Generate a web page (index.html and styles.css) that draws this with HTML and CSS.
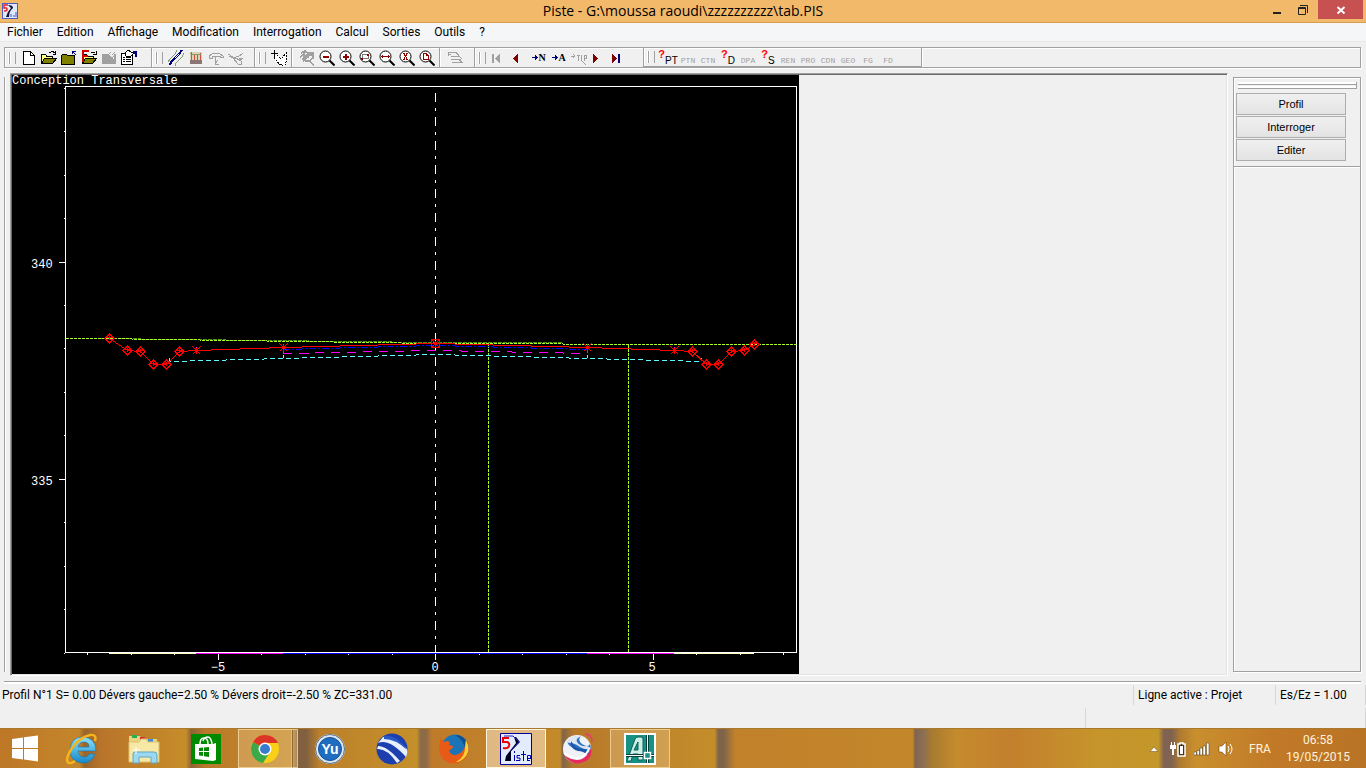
FILE: index.html
```
<!DOCTYPE html>
<html lang="fr">
    <head>
        <meta charset="UTF-8" />
        <meta name="viewport" content="width=device-width, initial-scale=1.0" />
        <title>Piste</title>
        <link rel="stylesheet" href="styles.css">
    </head>
    <body>
        <header class="titlebar">
            <svg class="app-icon" viewBox="0 0 16 16">
                <rect x=".5" y=".5" width="15" height="15" fill="#dfe8fb" stroke="#4a5ec8" />
                <path d="M6 2h-4v3h2.500q2 3-2.500 3" fill="none" stroke="#f02020" stroke-width="1.500" />
                <path d="M6 2q5 0 5 3q-4 3-4 9H4q1-5 5-9" fill="#111133" />
                <path d="M9 11v3M11 13h2M14 9v5" stroke="#3a50d0" />
            </svg>
            <h1>Piste - G:\moussa raoudi\zzzzzzzzzz\tab.PIS</h1>
            <div class="window-buttons">
                <button class="win-btn" aria-label="Réduire">
                    <svg viewBox="0 0 12 12"><path d="M2 8h8v2H2z" fill="#222" /></svg>
                </button>
                <button class="win-btn" aria-label="Restaurer">
                    <svg viewBox="0 0 12 12" fill="none" stroke="#222"><path d="M3 1.500h7.500V9" /><path d="M1.500 3.500h7v7h-7zM1 4.500h8" /></svg>
                </button>
                <button class="win-btn close" aria-label="Fermer">
                    <svg viewBox="0 0 12 12" stroke="#fff" stroke-width="2"><path d="M2.500 3l7 6.500M9.500 3l-7 6.500" /></svg>
                </button>
            </div>
        </header>

        <nav class="menubar">
            <button>Fichier</button>
            <button>Edition</button>
            <button>Affichage</button>
            <button>Modification</button>
            <button>Interrogation</button>
            <button>Calcul</button>
            <button>Sorties</button>
            <button>Outils</button>
            <button>?</button>
        </nav>

        <div class="toolbar">
            <div class="tool-group files">
                <span class="grip"></span>
                <button aria-label="Nouveau"><svg viewBox="0 0 16 16"><path d="M2.500 1.500h7l4 4v9h-11z" fill="#fff" stroke="#000" /><path d="M9.500 1.500v4h4" fill="none" stroke="#000" /></svg></button>
                <button aria-label="Ouvrir"><svg viewBox="0 0 16 16"><path d="M.5 13.500v-9h4l1 1.500h6v3" fill="#ffff80" stroke="#000" /><path d="M.5 13.500l3-5h12l-4 5z" fill="#808000" stroke="#000" /><path d="M8.500 3q3-3 5 0M14.500 1v3h-3" fill="none" stroke="#000" /></svg></button>
                <button aria-label="Fermer le dossier"><svg viewBox="0 0 16 16"><path d="M.5 14.500v-9l1-1.500h4l1 1.500h7v9z" fill="#808000" stroke="#000" /><path d="M11.500 4V1.500H15M12 2l3 3" fill="none" stroke="#000080" /></svg></button>
                <button aria-label="Fond de plan"><svg viewBox="0 0 16 16"><path d="M1.500 13.500v-9h4l1 1.500h6v3" fill="#ffff80" stroke="#000" /><path d="M1.500 13.500l3-5h11l-4 5z" fill="#808000" stroke="#000" /><path d="M2 12V1h6M2 6h5" fill="none" stroke="#d00000" stroke-width="2" /><path d="M10 3q3-2 4 0M15 1v3h-3" fill="none" stroke="#000" /></svg></button>
                <button disabled aria-label="Enregistrer"><svg viewBox="0 0 16 16"><path d="M1 4h6l6 5V4h2v10H1z" fill="#a0a0a0" /><path d="M8 4l2-2M11 5l3-3M11 8l4-4" stroke="#a0a0a0" /></svg></button>
                <button aria-label="Propriétés"><svg viewBox="0 0 16 16"><path d="M.5 3.500h11v11H.5z" fill="#fff" stroke="#000" /><path d="M2 7.500h2M5 7.500h5M2 9.500h2M5 9.500h5M2 11.500h2M5 11.500h5" stroke="#000" /><path d="M4 3l3-3 3 2 3 1-3 3H5z" fill="#fff" stroke="#000" /><path d="M12 1h4v6h-2V4h-2z" fill="#000080" /></svg></button>
            </div>
            <div class="tool-group views">
                <span class="grip"></span>
                <button aria-label="Axe en plan"><svg viewBox="0 0 16 16" fill="none"><path d="M0 12q2-4 5-6t4-6M7 16q0-3 4-6t5-7" stroke="#7f9f70" /><path d="M2 15q1-4 5-7t7-8" stroke="#000080" stroke-width="2" /><path d="M7 8l4-4" stroke="#fff" /></svg></button>
                <button aria-label="Profil en long"><svg viewBox="0 0 16 16"><path d="M2 2h12v12H2z" fill="#d9d4b8" /><path d="M3.500 2v9M6.500 5v6M9.500 4v7M12.500 3v8" stroke="#d05040" /><path d="M2 3l4 2 7-1" fill="none" stroke="#80a060" /><path d="M2 10h12v4H2z" fill="#8b7575" /></svg></button>
                <button disabled aria-label="Profil en travers"><svg viewBox="0 0 16 16" fill="none" stroke="#a0a0a0"><path d="M1 8V6q7-6 14 0v1h-3v-1H4v2zM7.500 7v7h3M7.500 14l2-4" /></svg></button>
                <button disabled aria-label="Perspective"><svg viewBox="0 0 16 16" fill="none" stroke="#a0a0a0"><path d="M0 4l5 3q5 1 10-4M1 6q7 5 14 2M5 8l5 6h3v-3L6 7M9 9h5" /></svg></button>
            </div>
            <div class="tool-group pick">
                <span class="grip"></span>
                <button aria-label="Désigner"><svg viewBox="0 0 16 16"><path d="M3.500 0v7M0 3.500h7" stroke="#000" /><path d="M3 7l3-2 3 3h2l4-5v9l-1 4H9L4 11z" fill="#fff" /><path d="M3 7l6 8M6 5l3 3h2l4-5v9l-1 3M9 15l2-1v2" fill="none" stroke="#000" stroke-dasharray="2 1" /></svg></button>
            </div>
            <div class="tool-group zooms">
                <button disabled aria-label="Redessiner"><svg viewBox="0 0 16 16" fill="none" stroke="#a0a0a0"><path d="M2 3l4-2 3 2v4l-5 4M1 7l6-5M3 10l7-7h4v5l-4 3H6M10 11l5 4M5 4v6M8 5h6M12 3l-6 6" stroke-width="1.500" /></svg></button>
                <button aria-label="Zoom arrière"><svg viewBox="0 0 16 16"><circle cx="6.500" cy="6.500" r="5.500" class="lens" /><path d="M10.500 10.500l5 5" class="stem" /><path d="M4 6.500h6" stroke="#900000" stroke-width="2" /></svg></button>
                <button aria-label="Zoom avant"><svg viewBox="0 0 16 16"><circle cx="6.500" cy="6.500" r="5.500" class="lens" /><path d="M10.500 10.500l5 5" class="stem" /><path d="M4 7h6M7 4v6" stroke="#900000" stroke-width="2" /></svg></button>
                <button aria-label="Zoom fenêtre"><svg viewBox="0 0 16 16"><circle cx="6.500" cy="6.500" r="5.500" class="lens" /><path d="M10.500 10.500l5 5" class="stem" /><path d="M3.500 4.500h6v4h-6z" fill="none" stroke="#777" /><path d="M8 4h2v2H8zM2 8h2v2H2z" fill="#900000" /></svg></button>
                <button aria-label="Zoom largeur"><svg viewBox="0 0 16 16"><circle cx="6.500" cy="6.500" r="5.500" class="lens" /><path d="M10.500 10.500l5 5" class="stem" /><path d="M2 6.500h9M3.500 5v3M9.500 5v3" stroke="#900000" /></svg></button>
                <button aria-label="Zoom X"><svg viewBox="0 0 16 16"><circle cx="6.500" cy="6.500" r="5.500" class="lens" /><path d="M10.500 10.500l5 5" class="stem" /><path d="M4 3.500h2M7 3.500h2M5 4l3 5M8 4L5 9M4 9.500h2M7 9.500h2" stroke="#900000" /></svg></button>
                <button aria-label="Zoom page"><svg viewBox="0 0 16 16"><circle cx="6.500" cy="6.500" r="5.500" class="lens" /><path d="M10.500 10.500l5 5" class="stem" /><path d="M4.500 3.500h3l2 2v4h-5zM7.500 3.500v2h2" fill="#fff" stroke="#900000" /></svg></button>
            </div>
            <div class="tool-group layers">
                <button disabled aria-label="Calques"><svg viewBox="0 0 16 16" fill="none" stroke="#a0a0a0"><path d="M1 2.500h8l3 3M1 4.500h3M4 6.500h8l3 2M4 9.500h10M5 12.500h10l-3-3M1.500 2v4" /></svg></button>
            </div>
            <div class="tool-group steps">
                <span class="grip"></span>
                <button disabled aria-label="Premier"><svg viewBox="0 0 16 16" fill="#a0a0a0"><path d="M4 4h2v9H4zM12 4v9L7 8.500z" /></svg></button>
                <button class="back" aria-label="Précédent"><svg viewBox="0 0 16 16" fill="#800000"><path d="M10 4v9L5 8.500z" /></svg></button>
                <button class="goto"><svg viewBox="0 0 6 7"><path d="M0 3.500h5M3 1.500l2 2-2 2" fill="none" stroke="#000080" /></svg>N</button>
                <button class="goto"><svg viewBox="0 0 6 7"><path d="M0 3.500h5M3 1.500l2 2-2 2" fill="none" stroke="#000080" /></svg>A</button>
                <button disabled aria-label="Chercher"><svg viewBox="0 0 16 16" fill="none" stroke="#a0a0a0"><path d="M0 6h4M2 4l2 2-2 2M6 5h3M7 5v6M11 5q-2 3 0 6M13 5v6M13 5h2v3h-2M10 10l5 5" /></svg></button>
                <button class="forward" aria-label="Suivant"><svg viewBox="0 0 16 16" fill="#800000"><path d="M6 4v9l5-4.500z" /></svg></button>
                <button aria-label="Dernier"><svg viewBox="0 0 16 16"><path d="M4 4v9l5-4.500z" fill="#800000" /><path d="M10 4h2v9h-2z" fill="#000080" /></svg></button>
            </div>
            <div class="tool-group queries">
                <span class="grip"></span>
                <button class="query"><b>?</b>PT</button>
                <button class="code" disabled>PTN</button>
                <button class="code" disabled>CTN</button>
                <button class="query"><b>?</b>D</button>
                <button class="code" disabled>DPA</button>
                <button class="query"><b>?</b>S</button>
                <button class="code" disabled>REN</button>
                <button class="code" disabled>PRO</button>
                <button class="code" disabled>CDN</button>
                <button class="code" disabled>GEO</button>
                <button class="code" disabled>FG</button>
                <button class="code" disabled>FD</button>
            </div>
        </div>

        <main class="work">
            <div class="dock-edge"></div>
            <section class="view">
                <svg class="chart" viewBox="12 75 787 599">
                    <defs>
                        <path id="pt" d="M0-4.500L4.500 0 0 4.500-4.500 0zM-3-1H3M0-3V1" />
                        <path id="cross" d="M-4-4L4 4M4-4L-4 4M-3 0H3M0-3V3" />
                    </defs>
                    <rect x="12" y="75" width="787" height="599" fill="#000" />
                    <g class="axis">
                        <rect x="65.500" y="86.500" width="731" height="566" />
                        <path d="M87.500 653v2M131.500 653v2M174.500 653v2M218.500 653v7M261.500 653v2M305.500 653v2M348.500 653v2M392.500 653v2M435.500 653v7M479.500 653v2M522.500 653v2M566.500 653v2M609.500 653v2M653.500 653v7M696.500 653v2M740.500 653v2M783.500 653v2" />
                        <path d="M64 88.500h1M64 131.500h1M64 175.500h1M64 218.500h1M59 262.500h6M64 305.500h1M64 348.500h1M64 392.500h1M64 435.500h1M59 479.500h6M64 522.500h1M64 566.500h1M64 609.500h1M64 653.500h1" />
                        <path d="M435.500 93V652" stroke-dasharray="9 6 3 6" />
                    </g>
                    <g class="line">
                        <path d="M109 653.500h87M674 653.500h80" stroke="#ffffc8" />
                        <path d="M196 653.500h87M587 653.500h87" stroke="#ff00ff" />
                        <path d="M283 653.500h304" stroke="#0000ff" />
                        <path d="M98 338.500L435 342.500H562" stroke="#4c9900" stroke-dasharray="4 1" />
                        <path d="M66 338.500H98L435 343.500H562L564 344.500H798" stroke="#adff2f" stroke-dasharray="3 1" />
                        <path d="M488.500 345V652M628.500 345V652" stroke="#adff2f" stroke-dasharray="3 1" />
                        <path d="M169.500 358v3.500L435.500 354.500 701.500 361.500v-4" stroke="#60ffff" stroke-dasharray="5 3" />
                        <path d="M283.500 355v3M587.500 355v3" stroke="#60ffff" />
                        <path d="M283.500 353.500L435.500 350.500 587.500 353.500" stroke="#ff00ff" stroke-dasharray="9 7" />
                        <path d="M283.500 344v9M587.500 344v9M196.500 347v4M674.500 347v4" stroke="#ff00ff" />
                        <path d="M283.500 349.500L435.500 345.500 587.500 349.500" stroke="#0000ff" stroke-dasharray="7 2 2 2" />
                        <path d="M109.500 338.500L127.500 350.500 140.500 351.500 153.500 364.500H166.500L179.500 351.500 196.500 350.500 283.500 347.500 435.500 343.500 587.500 347.500 674.500 350.500 692.500 351.500 706.500 364.500H718.500L731.500 351.500 744.500 350.500 754.500 344.500" stroke="#ff0000" />
                    </g>
                    <g class="marks">
                        <use href="#pt" x="109.500" y="338.500" />
                        <use href="#pt" x="127.500" y="350.500" />
                        <use href="#pt" x="140.500" y="351.500" />
                        <use href="#pt" x="153.500" y="364.500" />
                        <use href="#pt" x="166.500" y="364.500" />
                        <use href="#pt" x="179.500" y="351.500" />
                        <use href="#cross" x="196.500" y="350.500" />
                        <use href="#cross" x="283.500" y="347.500" />
                        <path d="M431.500 339.500h8v8h-8z" />
                        <use href="#cross" x="435.500" y="343.500" />
                        <use href="#cross" x="587.500" y="347.500" />
                        <use href="#cross" x="674.500" y="350.500" />
                        <use href="#pt" x="692.500" y="351.500" />
                        <use href="#pt" x="706.500" y="364.500" />
                        <use href="#pt" x="718.500" y="364.500" />
                        <use href="#pt" x="731.500" y="351.500" />
                        <use href="#pt" x="744.500" y="350.500" />
                        <use href="#pt" x="754.500" y="344.500" />
                    </g>
                    <g class="labels">
                        <text x="12" y="84">Conception Transversale</text>
                        <text x="31" y="268">340</text>
                        <text x="31" y="485">335</text>
                        <text x="218" y="671" text-anchor="middle">−5</text>
                        <text x="435" y="671" text-anchor="middle">0</text>
                        <text x="652" y="671" text-anchor="middle">5</text>
                    </g>
                </svg>
            </section>
            <aside class="panel">
                <div class="panel-actions">
                    <div class="panel-grip"></div>
                    <button>Profil</button>
                    <button>Interroger</button>
                    <button>Editer</button>
                </div>
            </aside>
        </main>

        <footer class="status">
            <div class="status-row">
                <span class="message">Profil N°1 S= 0.00 Dévers gauche=2.50 % Dévers droit=-2.50 % ZC=331.00</span>
                <span class="active-line">Ligne active : Projet</span>
                <span class="scale">Es/Ez = 1.00</span>
            </div>
            <div class="status-row second"><span class="spare"></span></div>
        </footer>

        <div class="taskbar">
            <button class="start" aria-label="Démarrer">
                <svg viewBox="0 0 28 28" fill="#fff"><path d="M1 4l11-1.500V13H1zM13 2.300L27 .5V13H13zM1 14h11v10.500L1 23zM13 14h14v12.500l-14-2z" /></svg>
            </button>
            <button class="task" aria-label="Internet Explorer">
                <svg viewBox="0 0 32 32"><defs><linearGradient id="ie" x2="0" y2="1"><stop offset="0" stop-color="#8be4ff" /><stop offset="1" stop-color="#1588c9" /></linearGradient></defs>
                    <path d="M30 18H12q1 6 6 6 4 0 5-3h6q-3 9-12 9Q4 29 4 17 5 4 17 4q13 1 13 14zM12 14h11q0-5-5-5t-6 5z" fill="url(#ie)" stroke="#1470ac" stroke-width=".6" />
                    <path d="M29 8q2-7-5-6Q14 4 6 15-2 28 3 30q2 1 6-2" fill="none" stroke="#f5b51b" stroke-width="2.400" /></svg>
            </button>
            <button class="task" aria-label="Explorateur de fichiers">
                <svg viewBox="0 0 32 32"><path d="M1 3h11l2 3h15v22H1z" fill="#ead481" /><path d="M4 2h5v3H4z" fill="#22b14c" /><path d="M12 4h5v3h-5z" fill="#d03030" /><path d="M20 6h5v3h-5z" fill="#3a8ee0" /><path d="M1 9h10l2-3h5l2 3h11v20H1z" fill="#f8e8a6" stroke="#dcc16c" /><path d="M5 30V21q0-2 2-2h19q3 0 3 3v8h-6v-6H11v6z" fill="#9cd8ef" stroke="#5ea8c8" /><path d="M8 14v7M5 17h7" stroke="#fff" /></svg>
            </button>
            <button class="task" aria-label="Windows Store">
                <svg viewBox="0 0 32 32"><path d="M1 1h30v30H1z" fill="#008a00" /><path d="M5 11h18l3-1v17l-3 1L5 26z" fill="#fff" /><path d="M10 11q0-6 4-6t4 6M13 8q1-4 5-4 3 0 4 7" fill="none" stroke="#fff" stroke-width="1.500" /><path d="M9 15l4-.5V18H9zM14 14.500l5-.5v4h-5zM9 19h4v4l-4-.5zM14 19h5v5l-5-.7z" fill="#008a00" /></svg>
            </button>
            <button class="task open stacked" aria-label="Chrome">
                <svg viewBox="0 0 32 32"><circle cx="16" cy="16" r="14" fill="#f9cf18" /><path d="M16 16L4 9A14 14 0 0 0 14 30l7-11z" fill="#3ba849" /><path d="M16 16L4 9Q8 2 16 2q9 0 13 8H16z" fill="#dc3426" /><circle cx="16" cy="16" r="6.500" fill="#fff" /><circle cx="16" cy="16" r="5" fill="#3a7ccc" /></svg>
            </button>
            <button class="task" aria-label="YU">
                <svg viewBox="0 0 32 32"><circle cx="16" cy="16" r="15" fill="#dde6ee" /><circle cx="16" cy="16" r="14.500" fill="none" stroke="#596f88" /><circle cx="16" cy="16" r="11.500" fill="#1f6dc1" stroke="#184f91" /><text x="16" y="21" text-anchor="middle" class="yu">Yu</text></svg>
            </button>
            <button class="task" aria-label="Google Earth">
                <svg viewBox="0 0 32 32"><circle cx="16" cy="16" r="15.500" fill="#1d3fae" /><path d="M2 10q11-5 28 14 2-5 1-8Q18 3 7 4M1 16q10-1 20 14l3-2Q11 13 2 13z" fill="#e8f0fc" /><path d="M8 3q13-2 23 14Q20 6 8 6z" fill="#2958c9" /></svg>
            </button>
            <button class="task" aria-label="Firefox">
                <svg viewBox="0 0 32 32"><circle cx="17" cy="15" r="13.500" fill="#1b74b8" /><path d="M17 2q9 0 13 9v10q-2-1-3-5-1-9-10-14z" fill="#0d4f8f" /><path d="M27 7q8 11-2 20-10 7-19 0-7-7-4-18l1-4 3 4q3-2 6 0l-1 3 4 1q0 3-4 4 1 5 6 5 6-1 9-6 2-5 1-9z" fill="#e85b17" /><path d="M28 7q5 9 0 16-5 6-10 6 9-5 9-14z" fill="#fcd02e" /></svg>
            </button>
            <button class="task open current" aria-label="Piste">
                <svg viewBox="0 0 32 32"><path d="M.5.5h31v31H.5z" fill="#e3ebff" stroke="#0000a0" /><path d="M9 5H3v4h4q3 1 2 4t-6 2" fill="none" stroke="#f00000" stroke-width="2" /><path d="M14 4h2l4 5-9 9v10H5l1-5 10-13z" fill="#000020" /><path d="M4 3h9l6 6-8 9" fill="none" stroke="#2020c0" /><path d="M14.500 22v6M14.500 18v2M20 22.500h-3v2.500h3v2.500h-4M23.500 18v10M21 21.500h5M31 25.500h-4M27.500 28v-5.500h3V25M27 27.500h3" fill="none" stroke="#0000b0" /></svg>
            </button>
            <button class="task" aria-label="Baidu Spark">
                <svg viewBox="0 0 32 32"><circle cx="15" cy="16" r="14" fill="#eef2f7" /><path d="M5 9Q11 2 19 3q-4 4 1 8 6 4 8 0 2 7-1 12-2-7-10-7-9 0-12-7z" fill="#2f74c4" /><path d="M4 10Q11 1 20 3q-7 2-5 6 3 5 10 4 3 1 4 3-6 1-11-2Q11 9 4 10z" fill="#dfe8f2" /><path d="M9 8q5 9 13 8 5 1 4 6-5-4-10-4-8-2-7-10z" fill="#1c56a8" /><path d="M2 22q10 7 18 4 7-4 9-11 2 8-5 13-13 7-22-6z" fill="#e8295f" /><path d="M2 20q11 8 18 4 5-3 7-8" fill="none" stroke="#fff" stroke-width="2" /><path d="M23 1q7 0 7 8" fill="none" stroke="#ea3a70" stroke-width="1.500" /></svg>
            </button>
            <button class="task open" aria-label="AutoCAD">
                <svg viewBox="0 0 32 32"><path d="M1 1h30v30H1z" fill="#169184" stroke="#fff" stroke-width="2" /><path d="M3 28L11 6q1-2 3-2h3q2 0 2 2v21h-5v-6H9l-2 7zM10 17h4V9z" fill="#cdeee7" fill-rule="evenodd" stroke="#0a6158" /><path d="M23.500 2v17M2 22.500h17M23.500 25v5M26 22.500h4" stroke="#073f3a" stroke-width="3" /><path d="M23.500 2v17M2 22.500h17M23.500 25v5M26 22.500h4" stroke="#fff" /><path d="M20.500 19.500h6v6h-6z" fill="#169184" stroke="#fff" stroke-width="1.500" /></svg>
            </button>

            <div class="tray">
                <button aria-label="Icônes cachées"><svg viewBox="0 0 16 16"><path d="M8 6l4 4.500H4z" fill="#fff" stroke="#6b4a18" stroke-width=".5" /></svg></button>
                <button aria-label="Batterie"><svg viewBox="0 0 16 16"><path d="M8 3h2V2h3v1h2v12H8z" fill="#4b3412" stroke="#fff" stroke-width="1.500" /><path d="M10 5h3v8h-3z" fill="#fff" /><path d="M1 1h1v3h2V1h1v3h1v4H4v6H2V8H0V4h1z" fill="#fff" /></svg></button>
                <button aria-label="Réseau"><svg viewBox="0 0 16 16" fill="#fff" stroke="#4b3412" stroke-width=".5"><path d="M0 11h2.500v3H0zM3 9.500h2.500V14H3zM6 7h2.500v7H6zM9 5h2.500v9H9zM12.500 2H15v12h-2.500z" /></svg></button>
                <button aria-label="Volume"><svg viewBox="0 0 16 16"><path d="M1 5h3l4-4v14l-4-4H1z" fill="#fff" stroke="#4b3412" stroke-width=".5" /><path d="M10 5q2 3 0 6M12 3q4 5 0 10" fill="none" stroke="#fff" /></svg></button>
                <button class="lang">FRA</button>
                <button class="clock">06:58<br>19/05/2015</button>
            </div>
        </div>
    </body>
</html>
```
FILE: styles.css
```
* {
    box-sizing: border-box;
}

body {
    margin: 0;
    height: 100vh;
    display: flex;
    flex-direction: column;
    overflow: hidden;
    background-color: #f0f0f0;
    color: #000;
    font-family: Roboto, 'Open Sans', sans-serif;
    font-size: 12px;
}

button {
    display: flex;
    align-items: center;
    justify-content: center;
    margin: 0;
    padding: 0;
    border: none;
    background: none;
    color: inherit;
    font: inherit;
}

/* title bar */
.titlebar {
    display: grid;
    grid-template-columns: 1fr auto 1fr;
    align-items: center;
    height: 23px;
    flex: none;
    background-color: #f3b96b;
    border-bottom: 1px solid #d69c52;
}

.app-icon {
    width: 16px;
    height: 16px;
    margin-left: 2px;
}

.titlebar h1 {
    margin: 0;
    font-family: 'Open Sans', sans-serif;
    font-size: 14px;
    line-height: 22px;
    font-weight: normal;
}

.window-buttons {
    display: flex;
    align-self: start;
    justify-content: flex-end;
    padding-right: 3px;
}

.win-btn {
    width: 26px;
    height: 19px;
}

.win-btn svg {
    width: 12px;
    height: 12px;
}

.win-btn.close {
    width: 45px;
    margin-left: 2px;
    background-color: #c75050;
}

/* menu */
.menubar {
    display: flex;
    flex: none;
    height: 19px;
    background-color: #f5f6f7;
    border-bottom: 1px solid #e8e9ea;
}

.menubar button {
    padding: 0 7px;
}

/* toolbar */
.toolbar {
    display: flex;
    flex: none;
    height: 21px;
    margin: 5px 5px 0 4px;
    border: 1px solid #a0a0a0;
    box-shadow: inset 1px 1px #fff, 1px 1px #fff;
}

.tool-group {
    display: flex;
    align-items: center;
    border-right: 1px solid #a0a0a0;
    box-shadow: 1px 0 #fff;
}

.tool-group button {
    width: 20px;
    height: 18px;
}

.tool-group svg {
    flex: none;
    width: 16px;
    height: 16px;
    shape-rendering: crispEdges;
}

.grip {
    width: 7px;
    height: 12px;
    margin: 0 3px 0 4px;
    border: solid #a0a0a0;
    border-width: 0 1px;
    box-shadow: inset 1px 0 #fff, -1px 0 #fff;
}

.files {
    padding-right: 12px;
}

.views {
    padding-right: 8px;
}

.pick {
    padding-right: 2px;
}

.zooms {
    padding: 0 2px 0 5px;
}

.layers {
    padding: 0 9px 0 5px;
}

.steps {
    padding-right: 17px;
}

.steps .grip {
    margin-right: 0;
}

.steps .back {
    margin-right: 3px;
}

.steps .forward {
    width: 12px;
    margin-right: 5px;
}

.steps .goto {
    font-family: 'Liberation Serif', serif;
    font-size: 10px;
    font-weight: bold;
}

.steps .goto svg {
    width: 6px;
    height: 7px;
}

.queries {
    padding-right: 23px;
    border-bottom: 1px solid #a0a0a0;
}

.lens,
.stem {
    shape-rendering: geometricPrecision;
}

.lens {
    fill: #fff;
    stroke: #000;
}

.stem {
    stroke: #000;
    stroke-width: 2;
}

.tool-group .code,
.tool-group .query {
    align-items: flex-end;
    font-family: 'Liberation Mono', monospace;
    font-size: 8px;
    line-height: 10px;
    color: #a0a0a0;
}

.tool-group .query {
    font-family: 'Liberation Sans', sans-serif;
    font-size: 10px;
    color: #000;
}

.query b {
    align-self: flex-start;
    font-size: 11px;
    line-height: 12px;
    color: #f00;
}

/* work area */
.work {
    display: flex;
    flex: 1;
    min-height: 0;
    margin: 5px 5px 5px 4px;
}

.dock-edge {
    width: 2px;
    margin: 4px 4px 4px 0;
    background-color: #fff;
    border-left: 1px solid #a0a0a0;
}

.view {
    flex: 1;
    min-width: 0;
    padding: 1px;
    border: 1px solid;
    border-color: #a0a0a0 #fff #fff #a0a0a0;
    box-shadow: inset 1px 1px #696969, inset -1px -1px #e3e3e3;
}

.chart {
    display: block;
    height: 100%;
    max-width: 100%;
    overflow: visible;
}

.axis,
.line,
.marks {
    fill: none;
    shape-rendering: crispEdges;
}

.axis {
    stroke: #fff;
}

.marks {
    stroke: #f00;
}

.labels {
    fill: #fff;
    font-family: 'Liberation Mono', monospace;
    font-size: 12px;
}

.panel {
    width: 128px;
    margin: 4px 0 4px 5px;
    border: 1px solid #a0a0a0;
    box-shadow: inset 1px 1px #fff, 1px 1px #fff;
}

.panel-actions {
    display: flex;
    flex-direction: column;
    gap: 1px;
    padding: 4px 2px 5px;
    border-bottom: 1px solid #a0a0a0;
    box-shadow: 0 1px #fff;
}

.panel-grip {
    height: 7px;
    margin: 0 1px 3px 2px;
    border: solid #a0a0a0;
    border-width: 0 1px 1px 0;
    background: linear-gradient(#fff 2px, #a0a0a0 2px, #a0a0a0 3px, #f0f0f0 3px, #f0f0f0 4px, #fff 4px);
}

.panel-actions button {
    height: 22px;
    margin-right: 12px;
    border: 1px solid #adadad;
    background: linear-gradient(#f0f0f0, #e3e3e3);
    font-family: 'Liberation Sans', sans-serif;
    font-size: 11px;
}

/* status */
.status {
    flex: none;
}

.status::before {
    content: '';
    display: block;
    height: 2px;
    margin: 0 5px 0 4px;
    background-color: #fff;
    border-top: 1px solid #a0a0a0;
}

.status-row {
    display: flex;
    height: 20px;
    margin-top: 1px;
    line-height: 20px;
    border-right: 1px solid #d7d7d7;
}

.message {
    flex: 1;
    padding-left: 2px;
}

.active-line,
.scale {
    width: 142px;
    padding-left: 4px;
    border-left: 1px solid #d7d7d7;
}

.scale {
    width: 90px;
}

.status-row.second {
    justify-content: flex-end;
    margin-top: 3px;
}

.spare {
    width: 280px;
    border-left: 1px solid #d7d7d7;
}

/* taskbar over the wooden wallpaper */
.taskbar {
    display: flex;
    flex: none;
    height: 40px;
    gap: 2px;
    border-top: 1px solid #a8792c;
    background: linear-gradient(
        90deg,
        #bd7726 0%, #c4862b 5.8%, #99652a 6.2%, #b9742a 7.4%, #c68d2a 13.6%,
        #8c6338 14%, #ba792a 15%, #c58b2b 21.4%, #80603f 21.8%, #80603f 22.4%,
        #bd802b 23.4%, #c4902a 30.5%, #8d6b48 30.8%, #8d6b48 31.2%, #bf7a2a 31.6%,
        #c38a2a 41%, #80644a 41.2%, #b8792a 42%, #c48d2b 52.3%, #80644a 52.6%,
        #80644a 53%, #c1802a 53.8%, #c3872b 66.8%, #806452 67%, #8c7053 67.6%,
        #a77a30 68.2%, #c58b2c 70%, #c37f2d 74%, #c6942b 80%, #c3972a 84.8%,
        #806254 85.2%, #80644e 85.8%, #af7b30 86.4%, #c98f2d 87.5%, #c27a28 93%, #b97325 100%
    );
}

.taskbar svg {
    width: 32px;
    height: 32px;
}

.start {
    width: 50px;
}

.taskbar .start svg {
    width: 28px;
    height: 28px;
}

.task {
    width: 60px;
}

.task.open {
    border: 1px solid rgba(255, 236, 190, .6);
    background-color: rgba(255, 235, 200, .25);
}

.task.stacked {
    padding-right: 6px;
    background: linear-gradient(90deg, transparent 52px, #e0bc82 52px, #e0bc82 53px, #8d6833 53px, #8d6833 54px, transparent 54px), rgba(255, 235, 200, .25);
}

.task.current {
    border-color: #fff6df;
    background-color: rgba(255, 240, 220, .5);
}

.yu {
    fill: #fff;
    font-family: 'Liberation Sans', sans-serif;
    font-size: 14px;
    font-weight: bold;
}

.tray {
    display: flex;
    align-items: center;
    margin-left: auto;
    padding-right: 18px;
    color: #fff3dc;
}

.tray button {
    width: 24px;
}

.taskbar .tray svg {
    width: 16px;
    height: 16px;
}

.tray .lang {
    width: 44px;
}

.tray .clock {
    width: 60px;
    margin-left: 6px;
    line-height: 17px;
}
```
